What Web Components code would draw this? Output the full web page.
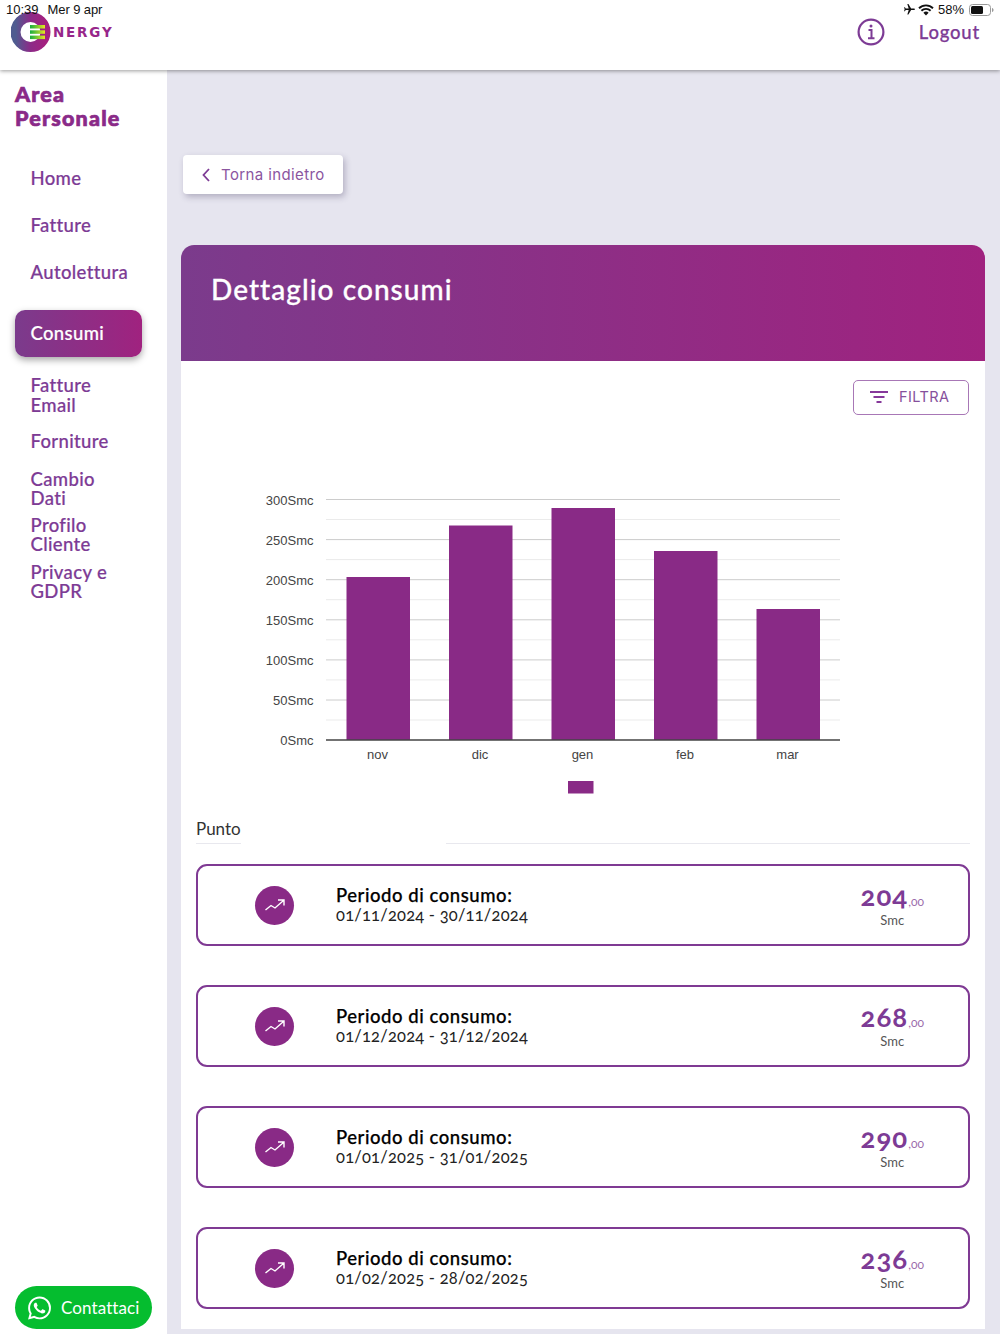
<!DOCTYPE html>
<html lang="it">
<head>
<meta charset="utf-8">
<title>Dettaglio consumi</title>
<style>
  html, body { margin: 0; height: 1334px; overflow: hidden; background: #e6e5ef; font-family: Lato, "Open Sans", sans-serif; }
</style>
</head>
<body>
<status-bar></status-bar>
<app-header></app-header>
<div style="display:flex;height:1264px">
  <side-nav>
    <nav-item>Home</nav-item>
    <nav-item>Fatture</nav-item>
    <nav-item>Autolettura</nav-item>
    <nav-item active style="margin-top:15px">Consumi</nav-item>
    <nav-item compact style="margin-top:19px">Fatture<br>Email</nav-item>
    <nav-item compact style="margin-top:17px">Forniture</nav-item>
    <nav-item compact style="margin-top:18px">Cambio<br>Dati</nav-item>
    <nav-item compact style="margin-top:7px">Profilo<br>Cliente</nav-item>
    <nav-item compact style="margin-top:8px">Privacy e<br>GDPR</nav-item>
    <contact-button slot="footer">Contattaci</contact-button>
  </side-nav>
  <main style="flex:1;min-width:0;display:flex;flex-direction:column;align-items:flex-start;padding:85px 15px 0 14px">
    <back-button>Torna indietro</back-button>
    <consumption-panel style="margin-top:51px">
      <span slot="title">Dettaglio consumi</span>
      <period-card><span slot="range">01/11/2024 - 30/11/2024</span><span slot="amount">204</span></period-card>
      <period-card><span slot="range">01/12/2024 - 31/12/2024</span><span slot="amount">268</span></period-card>
      <period-card><span slot="range">01/01/2025 - 31/01/2025</span><span slot="amount">290</span></period-card>
      <period-card><span slot="range">01/02/2025 - 28/02/2025</span><span slot="amount">236</span></period-card>
    </consumption-panel>
  </main>
</div>

<script>
// iOS status bar, lies over the app header
class StatusBar extends HTMLElement {
  constructor () {
    super();
    this.attachShadow({ mode: 'open' }).innerHTML = `
    <style>
      :host { position: absolute; top: 0; left: 0; right: 0; height: 19px; z-index: 5; display: flex; align-items: center;
        padding: 0 6px; box-sizing: border-box; font: 13px "Liberation Sans", sans-serif; color: #111; }
      .left { display: flex; gap: 9px; }
      .left span + span { letter-spacing: -.1px; }
      .right { margin-left: auto; display: flex; align-items: center; gap: 4px; }
      .plane { margin-right: -2px; }
      svg { display: block; }
    </style>
    <div class="left"><span>10:39</span><span>Mer 9 apr</span></div>
    <div class="right">
      <svg class="plane" width="13" height="13" viewBox="0 0 24 24"><path fill="#111" d="M21 16v-2l-8-5V3.5a1.5 1.5 0 0 0-3 0V9l-8 5v2l8-2.5V19l-2 1.5V22l3.500-1 3.500 1v-1.500L13 19v-5.500z" transform="rotate(90 12 12)"/></svg>
      <svg width="16" height="12" viewBox="0 0 16 12"><path fill="none" stroke="#111" stroke-width="1.900" d="M1 4.200a10 10 0 0 1 14 0M3.400 6.700a6.600 6.600 0 0 1 9.200 0"/><path fill="#111" d="M8 11.500 5.400 8.800a3.700 3.700 0 0 1 5.200 0z"/></svg>
      <span>58%</span>
      <svg width="25" height="12" viewBox="0 0 25 12" style="margin-left:1px"><rect x=".5" y=".5" width="21" height="11" rx="3" fill="none" stroke="#999"/><rect x="2" y="2" width="12" height="8" rx="1.500" fill="#111"/><path d="M23 4c1 .3 1.500 1 1.500 2s-.5 1.700-1.500 2z" fill="#999"/></svg>
    </div>`;
  }
}
customElements.define('status-bar', StatusBar);

class AppHeader extends HTMLElement {
  constructor () {
    super();
    this.attachShadow({ mode: 'open' }).innerHTML = `
    <style>
      :host { display: flex; align-items: center; height: 70px; padding: 0 20px 6px 11px; box-sizing: border-box; background: #fff;
        box-shadow: 0 1px 4px rgba(0,0,0,.4); position: relative; z-index: 3; }
      .logo { display: flex; align-items: center; position: relative; }
      .word { margin: 2px 0 0 -10px; font: 700 13.500px/1 "DejaVu Sans", sans-serif; letter-spacing: 1.800px; color: #97268a; }
      svg { display: block; }
      .actions { margin-left: auto; display: flex; align-items: center; gap: 34px; }
      .logout { font-size: 18.500px; font-weight: 500; letter-spacing: .8px; color: #7d3b95; -webkit-text-stroke: .25px #7d3b95; }
    </style>
    <div class="logo">
      <svg width="52" height="40" viewBox="0 0 52 40">
        <defs>
          <linearGradient id="ring"><stop offset="0" stop-color="#4f5c90"/><stop offset=".5" stop-color="#8c2a88"/><stop offset="1" stop-color="#a4207f"/></linearGradient>
          <linearGradient id="bars"><stop offset="0" stop-color="#17ad3f"/><stop offset="1" stop-color="#e8e620"/></linearGradient>
        </defs>
        <circle cx="19.500" cy="20" r="15" fill="none" stroke="url(#ring)" stroke-width="10"/>
        <rect x="19" y="13" width="15" height="3.500" fill="url(#bars)"/>
        <rect x="19" y="18.300" width="15" height="3.500" fill="url(#bars)"/>
        <rect x="19" y="23.600" width="15" height="3.500" fill="url(#bars)"/>
      </svg>
      <span class="word">NERGY</span>
    </div>
    <div class="actions">
      <svg width="28" height="28" viewBox="0 0 28 28" fill="none" stroke="#7d3b95" stroke-width="2.200">
        <circle cx="14" cy="14" r="12.400"/>
        <path d="M11.500 12h3v8M11 20.200h6.500" stroke-width="2"/>
        <circle cx="14" cy="8" r="1.500" fill="#7d3b95" stroke="none"/>
      </svg>
      <span class="logout">Logout</span>
    </div>`;
  }
}
customElements.define('app-header', AppHeader);

class SideNav extends HTMLElement {
  constructor () {
    super();
    this.attachShadow({ mode: 'open' }).innerHTML = `
    <style>
      :host { display: flex; flex-direction: column; width: 167px; flex: none; box-sizing: border-box; background: #fff; padding: 13px 15px 5px; }
      h2 { margin: 0 0 25px; font-size: 21.500px; line-height: 23.500px; font-weight: 900; color: #8a2a88; letter-spacing: 1.200px; height: 46px; -webkit-text-stroke: .7px #8a2a88; }
      nav { display: flex; flex-direction: column; }
      .foot { margin-top: auto; }
    </style>
    <h2>Area<br>Personale</h2>
    <nav><slot></slot></nav>
    <div class="foot"><slot name="footer"></slot></div>`;
  }
}
customElements.define('side-nav', SideNav);

class NavItem extends HTMLElement {
  constructor () {
    super();
    this.attachShadow({ mode: 'open' }).innerHTML = `
    <style>
      :host { display: flex; align-items: center; width: 127px; height: 47px; box-sizing: border-box; padding: 2px 0 0 15.500px; border-radius: 10px;
        font-size: 18.500px; font-weight: 500; line-height: 19.500px; letter-spacing: .35px; color: #7d3b95; -webkit-text-stroke: .2px currentColor; }
      :host([compact]) { height: auto; padding-top: 0; }
      :host([active]) { padding-top: 0; color: #fff; background: linear-gradient(90deg, #7b3b8c, #a0227f); box-shadow: 0 3px 7px rgba(0,0,0,.35); }
    </style>
    <span><slot></slot></span>`;
  }
}
customElements.define('nav-item', NavItem);

class ContactButton extends HTMLElement {
  constructor () {
    super();
    this.attachShadow({ mode: 'open' }).innerHTML = `
    <style>
      :host { display: inline-flex; align-items: center; gap: 10px; width: 137px; height: 43px; box-sizing: border-box; padding-left: 13px; border-radius: 22px;
        background: #05bd2f; color: #fff; font-size: 17px; letter-spacing: .1px; }
      svg { display: block; }
    </style>
    <svg width="23" height="24" viewBox="0 0 24 24"><path fill="#fff" d="M17.472 14.382c-.297-.149-1.758-.867-2.030-.967-.273-.099-.471-.148-.67.150-.197.297-.767.966-.940 1.164-.173.199-.347.223-.644.075-.297-.150-1.255-.463-2.390-1.475-.883-.788-1.480-1.761-1.653-2.059-.173-.297-.018-.458.130-.606.134-.133.298-.347.446-.520.149-.174.198-.298.298-.497.099-.198.050-.371-.025-.520-.075-.149-.669-1.612-.916-2.207-.242-.579-.487-.500-.669-.510-.173-.008-.371-.010-.570-.010-.198 0-.520.074-.792.372-.272.297-1.040 1.016-1.040 2.479 0 1.462 1.065 2.875 1.213 3.074.149.198 2.096 3.200 5.077 4.487.709.306 1.262.489 1.694.625.712.227 1.360.195 1.871.118.571-.085 1.758-.719 2.006-1.413.248-.694.248-1.289.173-1.413-.074-.124-.272-.198-.570-.347m-5.421 7.403h-.004a9.870 9.870 0 01-5.031-1.378l-.361-.214-3.741.982.998-3.648-.235-.374a9.860 9.860 0 01-1.510-5.260c.001-5.450 4.436-9.884 9.888-9.884 2.640 0 5.122 1.030 6.988 2.898a9.825 9.825 0 012.893 6.994c-.003 5.450-4.437 9.884-9.885 9.884m8.413-18.297A11.815 11.815 0 0012.050 0C5.495 0 .160 5.335.157 11.892c0 2.096.547 4.142 1.588 5.945L.057 24l6.305-1.654a11.882 11.882 0 005.683 1.448h.005c6.554 0 11.890-5.335 11.893-11.893a11.821 11.821 0 00-3.480-8.413z"/></svg>
    <span><slot></slot></span>`;
  }
}
customElements.define('contact-button', ContactButton);

class BackButton extends HTMLElement {
  constructor () {
    super();
    this.attachShadow({ mode: 'open' }).innerHTML = `
    <style>
      :host { display: inline-flex; align-items: center; gap: 11px; width: 160px; height: 39px; margin-left: 2px; box-sizing: border-box; padding-left: 19px;
        background: #fff; border-radius: 4px; box-shadow: 2px 3px 6px rgba(60,50,90,.3); color: #8b559f; font: 15px Inter, sans-serif; letter-spacing: .38px; }
      svg { display: block; flex: none; }
    </style>
    <svg width="8" height="14" viewBox="0 0 8 14" fill="none" stroke="#7d3b95" stroke-width="1.800"><path d="M7 1 1.500 7 7 13"/></svg>
    <span><slot></slot></span>`;
  }
}
customElements.define('back-button', BackButton);

// Main white panel: gradient title, filter, chart, Punto field, then the slotted cards
class ConsumptionPanel extends HTMLElement {
  constructor () {
    super();
    this.attachShadow({ mode: 'open' }).innerHTML = `
    <style>
      :host { display: block; width: 804px; background: #fff; border-radius: 13px 13px 0 0; overflow: hidden; }
      .head { height: 116px; box-sizing: border-box; padding: 27px 30px; background: linear-gradient(90deg, #7b3b8c, #a0227f); color: #fff;
        font-size: 28px; line-height: 34px; font-weight: 500; letter-spacing: 1.050px; -webkit-text-stroke: .3px #fff; }
      .tools { display: flex; justify-content: flex-end; padding: 19px 16px 0; }
      usage-chart { margin-top: 5px; }
      .point { display: flex; margin: 0 15px; height: 34px; box-sizing: border-box; font-size: 17px; color: #333; line-height: 38px; }
      .point span { width: 45px; border-bottom: 1px solid #e8e8ee; }
      .point i { margin-left: 205px; flex: 1; border-bottom: 1px solid #e8e8ee; }
      .cards { display: flex; flex-direction: column; gap: 39px; padding: 20px 15px 20px; }
    </style>
    <div class="head"><slot name="title"></slot></div>
    <div class="tools"><filter-button>FILTRA</filter-button></div>
    <usage-chart></usage-chart>
    <div class="point"><span>Punto</span><i></i></div>
    <div class="cards"><slot></slot></div>`;
  }
}
customElements.define('consumption-panel', ConsumptionPanel);

class FilterButton extends HTMLElement {
  constructor () {
    super();
    this.attachShadow({ mode: 'open' }).innerHTML = `
    <style>
      :host { display: inline-flex; align-items: center; gap: 11px; width: 116px; height: 35px; box-sizing: border-box; padding: 0 0 2px 16px;
        border: 1.300px solid #a877b6; border-radius: 5px; color: #86509c; font: 14.500px Inter, sans-serif; letter-spacing: .4px; }
      svg { display: block; flex: none; }
    </style>
    <svg width="18" height="12" viewBox="0 0 18 12" fill="#86389a"><rect width="18" height="2"/><rect x="3.500" y="5" width="11" height="2"/><rect x="6.500" y="10" width="5" height="2"/></svg>
    <span><slot></slot></span>`;
  }
}
customElements.define('filter-button', FilterButton);

// Bar chart, drawn in page coordinates through the viewBox
class UsageChart extends HTMLElement {
  constructor () {
    super();
    const axis = ['300Smc', '250Smc', '200Smc', '150Smc', '100Smc', '50Smc', '0Smc'];
    const bars = [
      { label: 'nov', x: 346.5, top: 577 },
      { label: 'dic', x: 449, top: 525.5 },
      { label: 'gen', x: 551.5, top: 508 },
      { label: 'feb', x: 654, top: 551 },
      { label: 'mar', x: 756.5, top: 609 }
    ];
    let grid = '';
    for (let i = 0; i < 6; i++) {
      const y = 499.5 + i * 40.1;
      grid += `<line x1="326" x2="840" y1="${y}" y2="${y}" stroke="#ccc"/>`;
      grid += `<line x1="326" x2="840" y1="${y + 20}" y2="${y + 20}" stroke="#ebebeb"/>`;
    }
    const labels = axis.map((t, i) => `<text x="313.500" y="${504.5 + i * 40.1}" text-anchor="end">${t}</text>`).join('');
    const rects = bars.map(b => `<rect x="${b.x}" y="${b.top}" width="63.500" height="${740 - b.top}" fill="#892a86"/>
      <text x="${b.x + 31}" y="759" text-anchor="middle">${b.label}</text>`).join('');
    this.attachShadow({ mode: 'open' }).innerHTML = `
    <style>
      :host { display: block; height: 390px; }
      svg { display: block; }
      text { font: 13px "Liberation Sans", sans-serif; fill: #444; }
    </style>
    <svg width="804" height="390" viewBox="181 420 804 390">
      ${grid}${labels}${rects}
      <line x1="326" x2="840" y1="740" y2="740" stroke="#444" stroke-width="1.300"/>
      <rect x="568" y="781" width="25.500" height="12.500" fill="#892a86"/>
    </svg>`;
  }
}
customElements.define('usage-chart', UsageChart);

class PeriodCard extends HTMLElement {
  constructor () {
    super();
    this.attachShadow({ mode: 'open' }).innerHTML = `
    <style>
      :host { display: flex; align-items: center; height: 82px; box-sizing: border-box; padding: 0 44px 0 57px; border: 2px solid #7f3a93; border-radius: 11px; color: #111; }
      .dot { width: 39px; height: 39px; flex: none; border-radius: 50%; background: #892a86; display: flex; align-items: center; justify-content: center; }
      svg { display: block; }
      .text { margin-left: 42px; font-size: 16.500px; line-height: 20px; letter-spacing: .22px; font-variant-numeric: oldstyle-nums; color: #222; }
      b { display: block; font-size: 18.500px; font-weight: 500; color: #000; letter-spacing: .55px; -webkit-text-stroke: .25px #000; }
      .value { margin-left: auto; text-align: center; padding-top: 2px; }
      .num { font-size: 27.500px; line-height: 24px; font-weight: 700; color: #7d3b95; font-variant-numeric: oldstyle-nums; letter-spacing: 1.100px; }
      .dec { font-size: 12px; color: #9a6aaa; font-weight: 400; letter-spacing: 0; -webkit-text-stroke: 0; }
      .unit { font-size: 13px; line-height: 15px; color: #555; margin-top: -1px; }
    </style>
    <div class="dot"><svg width="24" height="24" viewBox="0 0 24 24" fill="none" stroke="#fff" stroke-width="1.400"><path d="M2.500 17 8 12.500l4 2.500 8.500-7.500M15 7h6v5.500"/></svg></div>
    <div class="text"><b>Periodo di consumo:</b><slot name="range"></slot></div>
    <div class="value">
      <div class="num"><slot name="amount"></slot><span class="dec">,00</span></div>
      <div class="unit">Smc</div>
    </div>`;
  }
}
customElements.define('period-card', PeriodCard);
</script>
</body>
</html>
